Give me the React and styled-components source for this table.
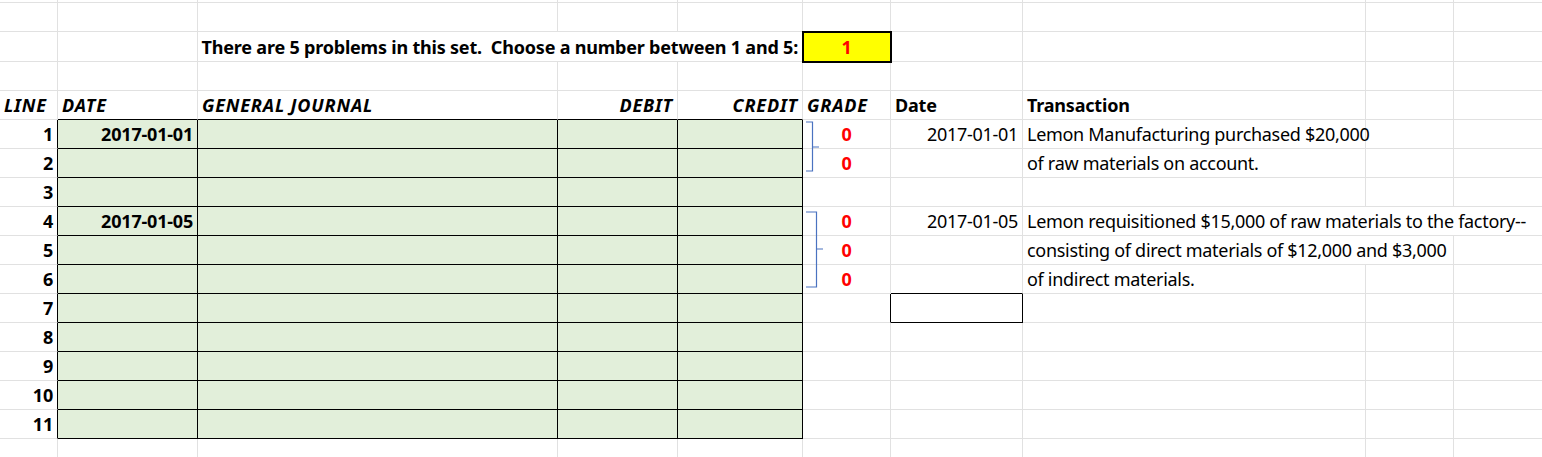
import styled, { createGlobalStyle } from 'styled-components';

const GlobalStyle = createGlobalStyle`
  html, body {
    margin: 0;
    padding: 0;
    background: #fff;
  }
  body {
    font-family: 'Noto Sans', 'Noto Sans CJK KR', sans-serif;
    font-size: 18px;
    color: #000;
  }
`;

const COLS = '58px 140px 360px 120px 125px 88px 132px 343px 88px 89px';
const GRID = '#e1e1e1';

const Sheet = styled.div`
  position: relative;
  width: 1542px;
  height: 457px;
  overflow: hidden;
`;

const Row = styled.div`
  display: grid;
  grid-template-columns: ${COLS};
  height: ${({ $h }) => $h}px;
`;

const Cell = styled.div`
  box-sizing: border-box;
  display: flex;
  align-items: flex-end;
  justify-content: ${({ $align }) =>
    $align === 'right' ? 'flex-end' : $align === 'center' ? 'center' : 'flex-start'};
  grid-column: span ${({ $span }) => $span || 1};
  padding: 0 4px 2px 4px;
  line-height: 24px;
  white-space: pre;
  font-weight: ${({ $bold }) => ($bold ? 700 : 400)};
  font-style: ${({ $italic }) => ($italic ? 'italic' : 'normal')};
  letter-spacing: ${({ $italic, $bold }) => ($italic ? '0.8px' : $bold ? '-0.2px' : '-0.3px')};
  color: ${({ $red }) => ($red ? '#ff0000' : '#000')};
  background: ${({ $green }) => ($green ? '#e2efda' : 'transparent')};
  border-right: 1px solid ${({ $r }) => ($r ? '#000' : GRID)};
  border-bottom: 1px solid ${({ $b }) => ($b ? '#000' : GRID)};
`;

const PickBox = styled(Cell)`
  position: relative;
  z-index: 1;
  background: #ffff00;
  outline: 2px solid #000;
  outline-offset: -1px;
`;

const Brace = styled.svg`
  position: absolute;
  left: 0;
  top: 0;
  overflow: visible;
  pointer-events: none;
`;

const rows = [
  { date: '2017-01-01', grade: true, tdate: '2017-01-01', text: 'Lemon Manufacturing purchased $20,000' },
  { grade: true, text: 'of raw materials on account.' },
  {},
  { date: '2017-01-05', grade: true, tdate: '2017-01-05', text: 'Lemon requisitioned $15,000 of raw materials to the factory--', span: 3 },
  { grade: true, text: 'consisting of direct materials of $12,000 and $3,000', span: 2 },
  { grade: true, text: 'of indirect materials.' },
  { box: true },
  {},
  {},
  {},
  {},
];

function Blank({ n }) {
  return Array.from({ length: n }, (_, i) => <Cell key={i} />);
}

function BodyRow({ line, row, next }) {
  const span = row.span || 1;
  return (
    <Row $h={29}>
      <Cell $align="right" $bold $r>{line}</Cell>
      <Cell $align="right" $bold $green $r $b>{row.date || ''}</Cell>
      <Cell $green $r $b />
      <Cell $green $r $b />
      <Cell $green $r $b />
      <Cell $align="center" $bold $red $r={row.box}>{row.grade ? '0' : ''}</Cell>
      <Cell $align="right" $r={row.box} $b={row.box || (next && next.box)}>{row.tdate || ''}</Cell>
      <Cell $span={span}>{row.text || ''}</Cell>
      <Blank n={3 - span} />
    </Row>
  );
}

export default function App() {
  return (
    <Sheet>
      <GlobalStyle />
      <Row $h={2}><Blank n={10} /></Row>
      <Row $h={30}><Blank n={10} /></Row>
      <Row $h={30}>
        <Cell />
        <Cell />
        <Cell $span={3} $align="right" $bold>
          {'There are 5 problems in this set.  Choose a number between 1 and 5:'}
        </Cell>
        <PickBox $align="center" $bold $red>1</PickBox>
        <Blank n={4} />
      </Row>
      <Row $h={29}><Blank n={10} /></Row>
      <Row $h={29}>
        <Cell $bold $italic>LINE</Cell>
        <Cell $bold $italic $b>DATE</Cell>
        <Cell $bold $italic $b>GENERAL JOURNAL</Cell>
        <Cell $bold $italic $b $align="right">DEBIT</Cell>
        <Cell $bold $italic $b $align="right">CREDIT</Cell>
        <Cell $bold $italic>GRADE</Cell>
        <Cell $bold>Date</Cell>
        <Cell $bold>Transaction</Cell>
        <Blank n={2} />
      </Row>
      {rows.map((row, i) => (
        <BodyRow key={i} line={i + 1} row={row} next={rows[i + 1]} />
      ))}
      <Row $h={40}><Blank n={10} /></Row>
      <Brace width="1542" height="457">
        <path d="M806 122 H812.5 V171 H806 M812.5 147 H819" fill="none" stroke="#4a72c0" strokeWidth="1.2" />
        <path d="M806 212 H816.5 V287 H806 M816.5 249 H823" fill="none" stroke="#4a72c0" strokeWidth="1.2" />
      </Brace>
    </Sheet>
  );
}
